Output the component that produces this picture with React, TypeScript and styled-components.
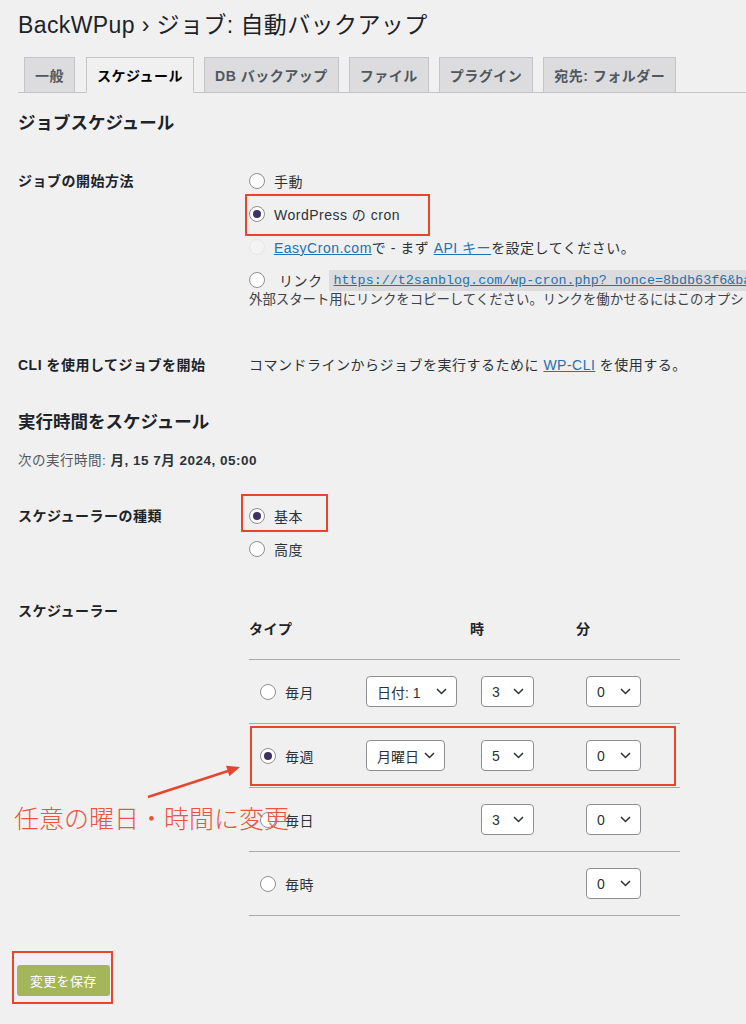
import styled, { createGlobalStyle } from 'styled-components';

const GlobalStyle = createGlobalStyle`
  body {
    margin: 0;
    background: #f0f0f1;
    font-family: "Liberation Sans", "Noto Sans CJK JP", sans-serif;
    color: #2c3338;
    letter-spacing: 0.5px;
    overflow-x: hidden;
  }
  * { box-sizing: border-box; }
`;

const Wrap = styled.div`
  position: relative;
  padding: 10px 0 20px 18px;
  min-height: 1024px;
`;

const Title = styled.h1`
  margin: 0;
  font-size: 23px;
  line-height: 30px;
  font-weight: 400;
  letter-spacing: 0.4px;
  color: #1d2327;
`;

const TabNav = styled.div`
  display: flex;
  margin-top: 17px;
  padding-left: 6px;
  border-bottom: 1px solid #c3c4c7;
`;

const Tab = styled.div<{ $active?: boolean }>`
  height: 36px;
  margin: 0 10px -1px 0;
  padding: 0 10px;
  display: flex;
  align-items: center;
  font-size: 14px;
  font-weight: 700;
  color: ${(p) => (p.$active ? '#000' : '#50575e')};
  background: ${(p) => (p.$active ? '#f0f0f1' : '#dcdcde')};
  border: 1px solid #c3c4c7;
  border-bottom-color: ${(p) => (p.$active ? '#f0f0f1' : '#c3c4c7')};
  &:first-child {
    margin-right: 11px;
  }
`;

const Heading = styled.h2<{ $mt: number }>`
  margin: ${(p) => p.$mt}px 0 0;
  font-size: 17.5px;
  line-height: 24px;
  font-weight: 700;
  letter-spacing: 0;
  color: #1d2327;
`;

const FormRow = styled.div<{ $mt?: number; $pt: number; $pb: number }>`
  display: grid;
  grid-template-columns: 231px 1fr;
  margin-top: ${(p) => p.$mt ?? 0}px;
  padding: ${(p) => p.$pt}px 0 ${(p) => p.$pb}px;
`;

const RowLabel = styled.div<{ $pt?: number }>`
  padding-top: ${(p) => p.$pt ?? 0}px;
  font-size: 14px;
  font-weight: 700;
  line-height: 20px;
  color: #1d2327;
`;

const RowValue = styled.div`
  min-width: 0;
`;

const OptionList = styled.div`
  display: flex;
  flex-direction: column;
  gap: 13px;
`;

const Option = styled.div`
  position: relative;
  display: flex;
  align-items: center;
  height: 20px;
  gap: 9px;
  font-size: 14px;
  color: #2c3338;
  white-space: nowrap;
`;

const Radio = styled.span<{ $checked?: boolean; $disabled?: boolean }>`
  position: relative;
  flex: none;
  width: 16px;
  height: 16px;
  border-radius: 50%;
  background: ${(p) => (p.$disabled ? '#f3f3f4' : '#fff')};
  border: 1px solid ${(p) => (p.$disabled ? '#e6e6e8' : '#8c8f94')};
  &::after {
    content: '';
    display: ${(p) => (p.$checked ? 'block' : 'none')};
    position: absolute;
    left: 3px;
    top: 3px;
    width: 8px;
    height: 8px;
    border-radius: 50%;
    background: #3e3263;
  }
`;

const Link = styled.a`
  color: #2271b1;
  text-decoration: underline;
`;

const LinkLabel = styled.span`
  margin-left: 5px;
`;

const CodeBox = styled.code`
  margin-left: -3px;
  padding: 0 5px;
  height: 21px;
  line-height: 21px;
  background: #dcdcde;
  font-family: "Liberation Mono", monospace;
  font-size: 13.4px;
  letter-spacing: 0;
`;

const Description = styled.p`
  margin: 0;
  font-size: 13.4px;
  line-height: 19px;
  letter-spacing: 0;
  white-space: nowrap;
  color: #3c434a;
`;

const ValueText = styled.div`
  font-size: 14px;
  line-height: 20px;
  color: #2c3338;
`;

const NextRun = styled.p`
  margin: 18px 0 0;
  font-size: 13.5px;
  line-height: 18px;
  color: #50575e;
  b {
    color: #2c3338;
  }
`;

const Mark = styled.span<{ $l: number; $t: number; $w: number; $h: number }>`
  position: absolute;
  left: ${(p) => p.$l}px;
  top: ${(p) => p.$t}px;
  width: ${(p) => p.$w}px;
  height: ${(p) => p.$h}px;
  border: 2px solid #e8452f;
  pointer-events: none;
`;

const SchedTable = styled.div`
  width: 431px;
`;

const TableLine = styled.div<{ $head?: boolean }>`
  position: relative;
  display: grid;
  grid-template-columns: 117px 104px 106px 104px;
  height: ${(p) => (p.$head ? 59 : 64)}px;
  padding: ${(p) => (p.$head ? '18px 0 20px' : '0')};
  align-items: ${(p) => (p.$head ? 'start' : 'center')};
  border-bottom: 1px solid #a7aaad;
`;

const HeadCell = styled.div`
  font-size: 14px;
  font-weight: 700;
  line-height: 20px;
  color: #1d2327;
`;

const Cell = styled.div<{ $pl?: number }>`
  padding-left: ${(p) => p.$pl ?? 0}px;
  display: flex;
  align-items: center;
`;

const SelectBox = styled.div<{ $w: number }>`
  width: ${(p) => p.$w}px;
  height: 31px;
  padding: 0 9px 0 10px;
  display: flex;
  align-items: center;
  justify-content: space-between;
  background: #fff;
  border: 1px solid #8c8f94;
  border-radius: 4px;
  font-size: 14px;
  letter-spacing: 0;
  color: #2c3338;
  white-space: nowrap;
`;

const Chevron = () => (
  <svg width="11" height="7" viewBox="0 0 11 7">
    <path d="M1 1l4.5 4.5L10 1" fill="none" stroke="#2c3338" strokeWidth="1.5" />
  </svg>
);

const Select = ({ w, value }: { w: number; value: string }) => (
  <SelectBox $w={w}>
    <span>{value}</span>
    <Chevron />
  </SelectBox>
);

const SaveFrame = styled.div`
  display: inline-block;
  margin: 35px 0 0 -6px;
  padding: 12px 1px 6px 3px;
  border: 2px solid #e8452f;
`;

const SaveButton = styled.button`
  height: 31px;
  padding: 0 13px;
  border: none;
  border-radius: 3px;
  background: #a5b55a;
  color: #fff;
  font-family: inherit;
  font-size: 13px;
  letter-spacing: 0.3px;
`;

const Callout = styled.div`
  position: absolute;
  left: 14px;
  top: 805px;
  z-index: 2;
  font-size: 25px;
  font-weight: 300;
  line-height: 28px;
  letter-spacing: 0;
  color: #ea5541;
  white-space: nowrap;
`;

const Arrow = styled.svg`
  position: absolute;
  left: 140px;
  top: 760px;
  z-index: 2;
`;

type Row = { label: string; checked?: boolean; day?: [number, string]; hour?: string; min: string };

const rows: Row[] = [
  { label: '毎月', day: [91, '日付: 1'], hour: '3', min: '0' },
  { label: '毎週', checked: true, day: [79, '月曜日'], hour: '5', min: '0' },
  { label: '毎日', hour: '3', min: '0' },
  { label: '毎時', min: '0' },
];

const App = () => {
  return (
    <Wrap>
      <GlobalStyle />
      <Title>BackWPup › ジョブ: 自動バックアップ</Title>
      <TabNav>
        <Tab>一般</Tab>
        <Tab $active>スケジュール</Tab>
        <Tab>DB バックアップ</Tab>
        <Tab>ファイル</Tab>
        <Tab>プラグイン</Tab>
        <Tab>宛先: フォルダー</Tab>
      </TabNav>

      <Heading $mt={18}>ジョブスケジュール</Heading>

      <FormRow $mt={21} $pt={15} $pb={31}>
        <RowLabel>ジョブの開始方法</RowLabel>
        <RowValue>
          <OptionList>
            <Option>
              <Radio />
              手動
            </Option>
            <Option>
              <Radio $checked />
              WordPress の cron
              <Mark $l={-4} $t={-10} $w={185} $h={42} />
            </Option>
            <Option>
              <Radio $disabled />
              <span>
                <Link>EasyCron.com</Link>で - まず <Link>API キー</Link>を設定してください。
              </span>
            </Option>
            <Option>
              <Radio />
              <LinkLabel>リンク</LinkLabel>
              <CodeBox>
                <Link>https://t2sanblog.com/wp-cron.php?_nonce=8bdb63f6&amp;backwpup_run=runext&amp;jobid=2</Link>
              </CodeBox>
            </Option>
          </OptionList>
          <Description>
            外部スタート用にリンクをコピーしてください。リンクを働かせるにはこのオプションを有効にする必要があります。
          </Description>
        </RowValue>
      </FormRow>

      <FormRow $pt={15} $pb={15}>
        <RowLabel>CLI を使用してジョブを開始</RowLabel>
        <ValueText>
          コマンドラインからジョブを実行するために <Link>WP-CLI</Link> を使用する。
        </ValueText>
      </FormRow>

      <Heading $mt={20}>実行時間をスケジュール</Heading>
      <NextRun>
        次の実行時間: <b>月, 15 7月 2024, 05:00</b>
      </NextRun>

      <FormRow $mt={21} $pt={15} $pb={15}>
        <RowLabel>スケジューラーの種類</RowLabel>
        <OptionList>
          <Option>
            <Radio $checked />
            基本
            <Mark $l={-8} $t={-12} $w={87} $h={38} />
          </Option>
          <Option>
            <Radio />
            高度
          </Option>
        </OptionList>
      </FormRow>

      <FormRow $pt={27} $pb={0}>
        <RowLabel>スケジューラー</RowLabel>
        <SchedTable>
          <TableLine $head>
            <HeadCell>タイプ</HeadCell>
            <HeadCell />
            <HeadCell>時</HeadCell>
            <HeadCell>分</HeadCell>
          </TableLine>
          {rows.map((r) => (
            <TableLine key={r.label}>
              <Cell $pl={11}>
                <Option>
                  <Radio $checked={r.checked} />
                  {r.label}
                </Option>
              </Cell>
              <Cell>{r.day && <Select w={r.day[0]} value={r.day[1]} />}</Cell>
              <Cell $pl={11}>{r.hour && <Select w={53} value={r.hour} />}</Cell>
              <Cell $pl={10}>
                <Select w={55} value={r.min} />
              </Cell>
              {r.checked && <Mark $l={1} $t={2} $w={426} $h={60} />}
            </TableLine>
          ))}
        </SchedTable>
      </FormRow>

      <SaveFrame>
        <SaveButton type="button">変更を保存</SaveButton>
      </SaveFrame>

      <Arrow width="110" height="45" viewBox="0 0 110 45">
        <line x1="8" y1="37" x2="88" y2="11" stroke="#e8452f" strokeWidth="2.5" />
        <polygon points="100,7 89.4,16.3 86,5.8" fill="#e8452f" />
      </Arrow>
      <Callout>任意の曜日・時間に変更</Callout>
    </Wrap>
  );
};

export default App;
